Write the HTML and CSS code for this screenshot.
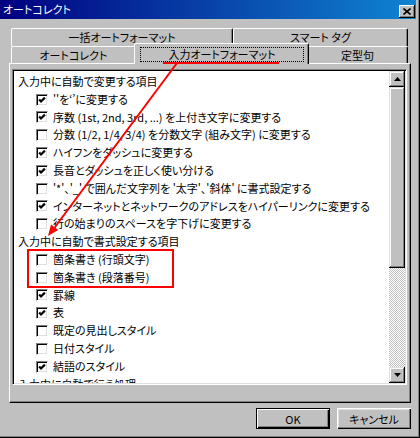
FILE: index.html
```html
<!DOCTYPE html>
<html lang="ja">
<head>
<meta charset="utf-8">
<title>オートコレクト</title>
<link rel="stylesheet" href="styles.css">
</head>
<body>
<div class="window">
  <div class="titlebar">
    <span class="title">オートコレクト</span>
    <span class="close-btn"><svg width="8" height="7" viewBox="0 0 8 7"><path d="M0.5 0.5 L7.5 6.5 M7.5 0.5 L0.5 6.5" stroke="#000" stroke-width="1.6" fill="none"/></svg></span>
  </div>
  <div class="client">
    <div class="tabs">
      <div class="tab-row back">
        <div class="tab t-ikkatsu">一括オートフォーマット</div>
        <div class="tab t-smart">スマート タグ</div>
      </div>
      <div class="tab-row front">
        <div class="tab t-ac">オートコレクト</div>
        <div class="tab t-input selected"><span class="focus">入力オートフォーマット</span></div>
        <div class="tab t-teikei">定型句</div>
      </div>
    </div>
    <div class="panel">
      <div class="listbox">
        <div class="list-content">
          <div class="group">入力中に自動で変更する項目</div>
          <div class="item"><span class="cb"><svg class="chk" width="8" height="8" viewBox="0 0 8 8"><path d="M1.1 3.5 L3 5.5 L6.9 1.6" fill="none" stroke="#000" stroke-width="2.2"/></svg></span><span class="label">''を‘’に変更する</span></div>
          <div class="item"><span class="cb"><svg class="chk" width="8" height="8" viewBox="0 0 8 8"><path d="M1.1 3.5 L3 5.5 L6.9 1.6" fill="none" stroke="#000" stroke-width="2.2"/></svg></span><span class="label">序数 (1st, 2nd, 3rd, ...) を上付き文字に変更する</span></div>
          <div class="item"><span class="cb"></span><span class="label">分数 (1/2, 1/4, 3/4) を分数文字 (組み文字) に変更する</span></div>
          <div class="item"><span class="cb"><svg class="chk" width="8" height="8" viewBox="0 0 8 8"><path d="M1.1 3.5 L3 5.5 L6.9 1.6" fill="none" stroke="#000" stroke-width="2.2"/></svg></span><span class="label">ハイフンをダッシュに変更する</span></div>
          <div class="item"><span class="cb"><svg class="chk" width="8" height="8" viewBox="0 0 8 8"><path d="M1.1 3.5 L3 5.5 L6.9 1.6" fill="none" stroke="#000" stroke-width="2.2"/></svg></span><span class="label">長音とダッシュを正しく使い分ける</span></div>
          <div class="item"><span class="cb"></span><span class="label">'*'、'_' で囲んだ文字列を '太字'、'斜体' に書式設定する</span></div>
          <div class="item"><span class="cb"><svg class="chk" width="8" height="8" viewBox="0 0 8 8"><path d="M1.1 3.5 L3 5.5 L6.9 1.6" fill="none" stroke="#000" stroke-width="2.2"/></svg></span><span class="label">インターネットとネットワークのアドレスをハイパーリンクに変更する</span></div>
          <div class="item"><span class="cb"></span><span class="label">行の始まりのスペースを字下げに変更する</span></div>
          <div class="group">入力中に自動で書式設定する項目</div>
          <div class="item"><span class="cb"></span><span class="label">箇条書き (行頭文字)</span></div>
          <div class="item"><span class="cb"></span><span class="label">箇条書き (段落番号)</span></div>
          <div class="item"><span class="cb"><svg class="chk" width="8" height="8" viewBox="0 0 8 8"><path d="M1.1 3.5 L3 5.5 L6.9 1.6" fill="none" stroke="#000" stroke-width="2.2"/></svg></span><span class="label">罫線</span></div>
          <div class="item"><span class="cb"><svg class="chk" width="8" height="8" viewBox="0 0 8 8"><path d="M1.1 3.5 L3 5.5 L6.9 1.6" fill="none" stroke="#000" stroke-width="2.2"/></svg></span><span class="label">表</span></div>
          <div class="item"><span class="cb"></span><span class="label">既定の見出しスタイル</span></div>
          <div class="item"><span class="cb"></span><span class="label">日付スタイル</span></div>
          <div class="item"><span class="cb"><svg class="chk" width="8" height="8" viewBox="0 0 8 8"><path d="M1.1 3.5 L3 5.5 L6.9 1.6" fill="none" stroke="#000" stroke-width="2.2"/></svg></span><span class="label">結語のスタイル</span></div>
          <div class="group">入力中に自動で行う処理</div>
        </div>
        <div class="scrollbar">
          <div class="sb-btn"><svg width="7" height="4" viewBox="0 0 7 4"><polygon points="3.5,0 7,4 0,4" fill="#000"/></svg></div>
          <div class="sb-thumb"></div>
          <div class="sb-track"></div>
          <div class="sb-btn"><svg width="7" height="4" viewBox="0 0 7 4"><polygon points="0,0 7,0 3.5,4" fill="#000"/></svg></div>
        </div>
      </div>
    </div>
    <div class="buttons">
      <button class="btn default">OK</button>
      <button class="btn">キャンセル</button>
    </div>
  </div>
  <svg class="annotation" width="420" height="438" viewBox="0 0 420 438">
    <rect x="163" y="62" width="116" height="2" fill="#ff0000"/>
    <line x1="177" y1="63" x2="55" y2="227" stroke="#ff0000" stroke-width="2"/>
    <polygon points="48,236 58.2,229.9 51,224.5" fill="#ff0000"/>
    <rect x="28" y="250" width="145" height="37" fill="none" stroke="#ff0000" stroke-width="2"/>
  </svg>
</div>
</body>
</html>
```

FILE: styles.css
```css
* {
  box-sizing: border-box;
}

html,
body {
  margin: 0;
  padding: 0;
}

body {
  width: 420px;
  height: 438px;
  overflow: hidden;
  background: #c0c0c0;
  font-family: "Noto Sans CJK JP", "Noto Sans", sans-serif;
  font-size: 11px;
  color: #000;
  font-feature-settings: "palt";
}

.window {
  position: relative;
  width: 420px;
  height: 438px;
  background: #c0c0c0;
  padding: 0 4px 4px 0;
  box-shadow: inset -1px -1px #000, inset -2px -2px #808080;
  display: flex;
  flex-direction: column;
}

.titlebar {
  flex: none;
  height: 19px;
  background: linear-gradient(to right, #000080, #1084d0);
  display: flex;
  align-items: flex-start;
}

.title {
  color: #fff;
  font-size: 11px;
  line-height: 19px;
  padding-left: 3px;
}

.close-btn {
  margin: 5px 1px 0 auto;
  width: 16px;
  height: 13px;
  background: #c0c0c0;
  box-shadow: inset -1px -1px #000, inset 1px 1px #fff, inset -2px -2px #808080;
  display: flex;
  align-items: center;
  justify-content: center;
}

.client {
  flex: 1;
  display: flex;
  flex-direction: column;
  padding: 9px 5px 0 9px;
}

.tabs {
  margin-left: 2px;
  width: 397px;
}

.tab-row {
  display: flex;
  align-items: flex-start;
}

.tab {
  flex: none;
  background: #c0c0c0;
  border-top: 1px solid #fff;
  border-left: 1px solid #fff;
  border-right: 1px solid #000;
  box-shadow: inset -1px 0 #808080;
  border-radius: 2px 2px 0 0;
  text-align: center;
  white-space: nowrap;
}

.back .tab {
  height: 18px;
  line-height: 16px;
}

.front .tab {
  height: 17px;
  line-height: 16px;
}

.t-ikkatsu {
  width: 222px;
}

.t-smart {
  width: 175px;
}

.t-ac {
  width: 125px;
}

.t-input {
  width: 175px;
}

.t-teikei {
  width: 101px;
}

.front .tab.selected {
  position: relative;
  z-index: 2;
  height: 21px;
  margin: -3px -2px -1px;
  padding-top: 1px;
}

.focus {
  display: block;
  margin: 2px 4px 0 5px;
  height: 15px;
  line-height: 13px;
  border: 1px dotted #000;
}

.panel {
  height: 340px;
  background: #c0c0c0;
  border-top: 1px solid #fff;
  border-left: 1px solid #fff;
  border-right: 1px solid #000;
  border-bottom: 1px solid #000;
  box-shadow: inset -1px -1px #808080;
  padding: 5px 2px 0 2px;
}

.listbox {
  width: 395px;
  height: 316px;
  display: flex;
  background: #fff;
  border: 1px solid;
  border-color: #808080 #fff #fff #808080;
  box-shadow: inset 1px 1px #000, inset -1px -1px #dfdfdf;
  padding: 1px;
}

.list-content {
  flex: 1;
  overflow: hidden;
  background: #fff;
  padding-top: 2px;
}

.group {
  height: 17.8px;
  line-height: 17.8px;
  padding-left: 4px;
  white-space: nowrap;
}

.item {
  height: 17.8px;
  display: flex;
  align-items: center;
  padding-left: 22px;
  white-space: nowrap;
}

.cb {
  flex: none;
  width: 12px;
  height: 12px;
  margin-right: 5px;
  padding: 1px;
  display: flex;
  background: #fff;
  border: 1px solid;
  border-color: #808080 #fff #fff #808080;
  box-shadow: inset 1px 1px #000, inset -1px -1px #dfdfdf;
}

.chk {
  display: block;
}

.label {
  line-height: 17.8px;
}

.scrollbar {
  flex: none;
  width: 16px;
  display: flex;
  flex-direction: column;
}

.sb-btn,
.sb-thumb {
  flex: none;
  background: #c0c0c0;
  box-shadow: inset -1px -1px #000, inset 1px 1px #dfdfdf, inset -2px -2px #808080, inset 2px 2px #fff;
}

.sb-btn {
  height: 16px;
  display: flex;
  align-items: center;
  justify-content: center;
}

.sb-thumb {
  height: 181px;
}

.sb-track {
  flex: 1;
  background: repeating-conic-gradient(#c0c0c0 0 25%, #fff 0 50%) 0 0 / 2px 2px;
}

.buttons {
  display: flex;
  justify-content: flex-end;
  gap: 7px;
  margin-top: 5px;
}

.btn {
  width: 74px;
  height: 21px;
  padding: 0;
  margin: 0;
  font: inherit;
  color: #000;
  background: #c0c0c0;
  border: none;
  box-shadow: inset 1px 1px #fff, inset -1px -1px #000, inset -2px -2px #808080, inset 2px 2px #dfdfdf;
}

.btn.default {
  border: 1px solid #000;
  box-shadow: inset 1px 1px #fff, inset -1px -1px #000, inset -2px -2px #808080;
}

.annotation {
  position: absolute;
  left: 0;
  top: 0;
  z-index: 10;
  pointer-events: none;
}
```
